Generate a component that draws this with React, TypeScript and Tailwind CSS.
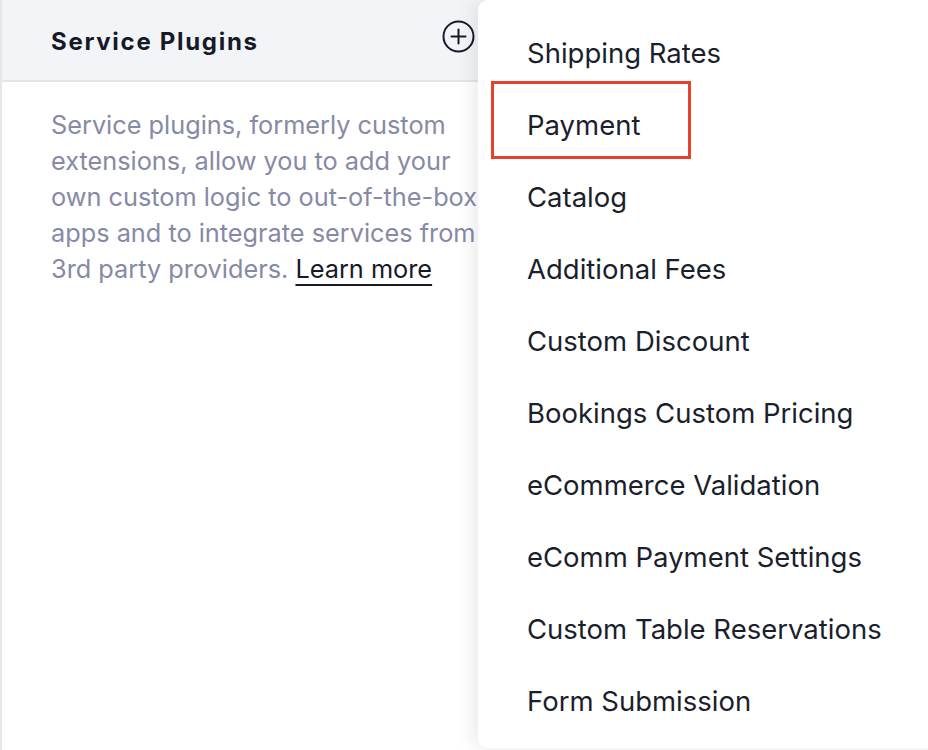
import React from "react";

const items = [
  "Shipping Rates",
  "Payment",
  "Catalog",
  "Additional Fees",
  "Custom Discount",
  "Bookings Custom Pricing",
  "eCommerce Validation",
  "eComm Payment Settings",
  "Custom Table Reservations",
  "Form Submission",
];

export default function App() {
  return (
    <div
      className="relative w-[928px] h-[750px] overflow-hidden bg-white"
      style={{ fontFamily: "Inter, 'Noto Sans', sans-serif" }}
    >
      <div className="h-full border-l-2 border-[#e6e6e6] flex flex-col">
        <div className="h-[82px] bg-[#f3f4f8] border-b-2 border-[#e4e5e9] flex items-center justify-between pl-[49px] pr-[452px]">
          <span className="text-[24px] font-bold tracking-[1.7px] text-[#161a28] mt-[4px]">
            Service Plugins
          </span>
          <svg width="33" height="33" viewBox="0 0 33 33" className="mr-[1px] mt-[-8px]">
            <circle cx="16.5" cy="16.5" r="15" fill="none" stroke="#161a28" strokeWidth="2" />
            <path d="M16.5 9.5v14M9.5 16.5h14" stroke="#161a28" strokeWidth="2" strokeLinecap="round" />
          </svg>
        </div>
        <div className="pl-[49px] pt-[25px] w-[500px] text-[25.3px] leading-[36px] text-[#868aa6] whitespace-nowrap">
          Service plugins, formerly custom
          <br />
          extensions, allow you to add your
          <br />
          own custom logic to out-of-the-box
          <br />
          apps and to integrate services from
          <br />
          3rd party providers.{" "}
          <span className="text-[#161a28] underline underline-offset-[6px] decoration-2">Learn more</span>
        </div>
      </div>

      <div className="absolute left-[478px] top-0 w-[470px] h-[748px] bg-white rounded-[10px] shadow-[-6px_0_18px_rgba(0,0,0,0.08)] pt-[18px]">
        {items.map((t) => (
          <div key={t} className="h-[72px] flex items-center pl-[49px] text-[27.5px] text-[#1b1f2d]">
            {t}
          </div>
        ))}
      </div>

      <div className="absolute left-[491px] top-[81px] w-[200px] h-[78px] border-[3px] border-[#e9402a]" />
    </div>
  );
}
